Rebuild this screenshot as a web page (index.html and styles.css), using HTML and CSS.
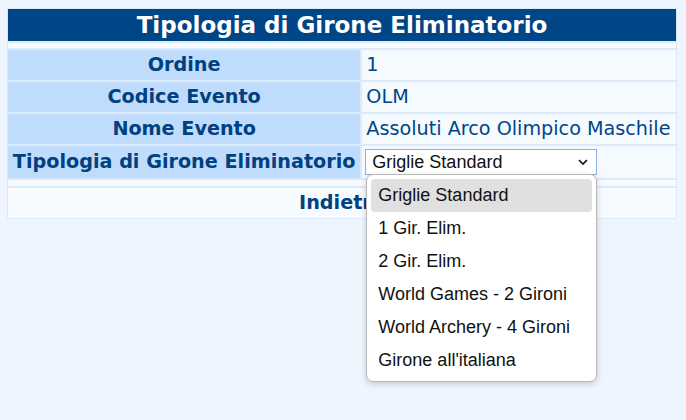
FILE: index.html
```html
<!DOCTYPE html>
<html lang="it">
<head>
    <meta charset="UTF-8">
    <meta name="viewport" content="width=device-width, initial-scale=1.0">
    <title>Tipologia di Girone Eliminatorio</title>
    <link rel="stylesheet" href="styles.css">
</head>
<body>
    <table class="grid">
        <tr><th colspan="2" class="title">Tipologia di Girone Eliminatorio</th></tr>
        <tr class="spacer"><td colspan="2"></td></tr>
        <tr><th class="label">Ordine</th><td class="value">1</td></tr>
        <tr><th class="label">Codice Evento</th><td class="value">OLM</td></tr>
        <tr><th class="label">Nome Evento</th><td class="value">Assoluti Arco Olimpico Maschile</td></tr>
        <tr class="select-row">
            <th class="label">Tipologia di Girone Eliminatorio</th>
            <td class="value">
                <div class="picker">
                    <div class="select">
                        <span>Griglie Standard</span>
                        <svg class="chevron" width="10" height="6" viewBox="0 0 10 6"><path d="M1 1l4 4 4-4" fill="none" stroke="#111" stroke-width="1.7"/></svg>
                    </div>
                    <ul class="options">
                        <li class="current">Griglie Standard</li>
                        <li>1 Gir. Elim.</li>
                        <li>2 Gir. Elim.</li>
                        <li>World Games - 2 Gironi</li>
                        <li>World Archery - 4 Gironi</li>
                        <li>Girone all'italiana</li>
                    </ul>
                </div>
            </td>
        </tr>
        <tr class="spacer tall"><td colspan="2"></td></tr>
        <tr><td colspan="2" class="actions"><a class="back" href="#">Indietro</a></td></tr>
    </table>
</body>
</html>
```

FILE: styles.css
```css
html {
    height: 100%;
}
body {
    margin: 8px 9px 8px 7px;
    min-height: calc(100% - 16px);
    background-color: #eef5fe;
    font-family: "DejaVu Sans", Verdana, sans-serif;
    font-size: 19.2px;
}
.grid {
    width: 100%;
    border-collapse: separate;
    border-spacing: 0;
}
.grid th, .grid td {
    border: 1px solid #dcebfb;
}
.title {
    background: #004586;
    color: #fff;
    font-size: 23px;
    font-weight: bold;
    padding: 2px 4px;
    line-height: 28px;
}
.spacer td {
    height: 5px;
    padding: 0;
    line-height: 0;
    background: #f7fbff;
}
.spacer.tall td {
    height: 6px;
}
.label {
    background: #bfdcfd;
    color: #00417f;
    text-align: center;
    padding: 4px;
    line-height: 22px;
    white-space: nowrap;
}
.value {
    background: #f5faff;
    color: #00458a;
    padding: 4px;
    line-height: 22px;
    white-space: nowrap;
}
.select-row th, .select-row td {
    padding: 3px 4px;
}
.picker {
    position: relative;
    width: 232px;
    margin-left: -1px;
}
.select {
    display: flex;
    justify-content: space-between;
    align-items: center;
    height: 26px;
    box-sizing: border-box;
    border: 1px solid #8fb0dc;
    background: #fff;
    font-family: "Liberation Sans", Arial, sans-serif;
    font-size: 18px;
    line-height: 20px;
    color: #111;
    padding: 0 8px 0 6px;
}
.options {
    position: absolute;
    top: 25px;
    left: 1px;
    width: 231px;
    box-sizing: border-box;
    margin: 0;
    padding: 4px;
    list-style: none;
    background: #fff;
    border: 1px solid #b8b8b8;
    border-radius: 7px;
    box-shadow: 0 2px 6px rgba(0, 0, 0, 0.18);
    font-family: "Liberation Sans", Arial, sans-serif;
    font-size: 18px;
    color: #111;
    z-index: 1;
}
.options li {
    height: 33px;
    line-height: 33px;
    padding-left: 7px;
    border-radius: 4px;
}
.options .current {
    background: #e0e0e0;
}
.actions {
    text-align: center;
    background: #f7fbff;
    padding: 4px;
    line-height: 22px;
}
.back {
    color: #00417f;
    font-weight: bold;
    text-decoration: none;
}
```
